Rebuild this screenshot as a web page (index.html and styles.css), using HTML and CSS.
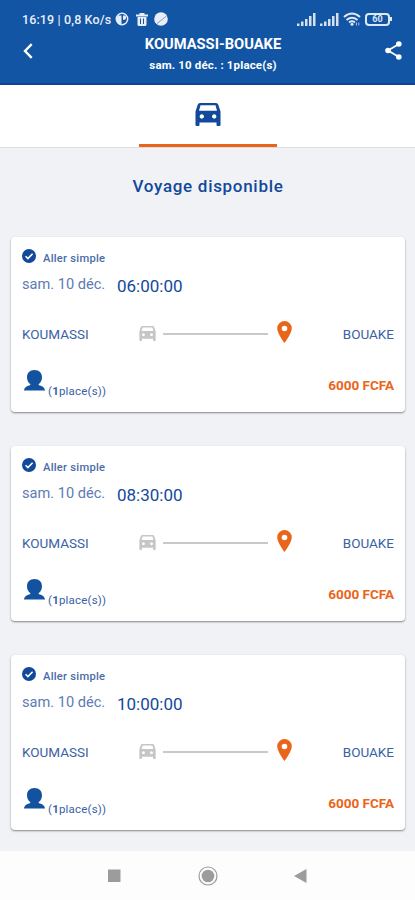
FILE: index.html
```html
<!DOCTYPE html>
<html lang="fr">
<head>
    <meta charset="UTF-8">
    <meta name="viewport" content="width=device-width, initial-scale=1.0">
    <title>KOUMASSI-BOUAKE</title>
    <link rel="stylesheet" href="styles.css">
</head>
<body>
    <!-- Shared icons -->
    <svg class="sprite" aria-hidden="true">
        <symbol id="icon-car" viewBox="0 0 26 23">
            <path fill-rule="evenodd" d="M5 0h16q1.800 0 2.200 1.500L25.500 8.500V22q0 1-1 1h-2q-1 0-1-1v-2.500h-17V22q0 1-1 1h-2q-1 0-1-1V8.500L2.800 1.500Q3.200 0 5 0zM5.500 2.200L4 7.800h18L20.500 2.200zM6.800 11.300a2.200 2.200 0 1 0 .01 0zM19.200 11.300a2.200 2.200 0 1 0 .01 0z"/>
        </symbol>
        <symbol id="icon-check" viewBox="0 0 14 14">
            <circle cx="7" cy="7" r="7"/>
            <path d="M3.600 7.200l2.300 2.300 4.700-4.800" fill="none" stroke="#fff" stroke-width="1.600"/>
        </symbol>
        <symbol id="icon-pin" viewBox="0 0 15 22">
            <path fill-rule="evenodd" d="M7.500 0A7.300 7.300 0 0 0 .2 7.300C.2 12.500 7.500 22 7.500 22s7.300-9.500 7.300-14.700A7.300 7.300 0 0 0 7.500 0zm0 4.700a2.800 2.800 0 1 1 0 5.600 2.800 2.800 0 0 1 0-5.600z"/>
        </symbol>
        <symbol id="icon-person" viewBox="0 0 21 21">
            <path d="M10.500 0c4.700 0 7.500 3 7.500 7.200 0 3.200-1.300 5.500-3.300 6.900v.8c3 1 5.800 2 6.300 5.600H0c.5-3.600 3.300-4.600 6.300-5.600v-.8C4.300 12.700 3 10.400 3 7.200 3 3 5.800 0 10.500 0z"/>
        </symbol>
        <symbol id="icon-signal" viewBox="0 0 19 13">
            <path d="M0 10.500h2.500V13H0zM4 8.500h2.500V13H4zM8 6h2.500v7H8zM12 3h2.500v10H12zM16 0h2.500v13H16z"/>
        </symbol>
    </svg>

    <header class="header">
        <div class="status-bar">
            <span class="status-text">16:19 | 0,8 Ko/s</span>
            <svg class="icon-round" viewBox="0 0 14 14">
                <circle cx="7" cy="7" r="5.700" fill="none" stroke="#e8eef8" stroke-width="1.500"/>
                <path d="M3 3.500h3.500V13q-5-1-5-6zM8 3.500h1.500q1.500 0 1.500 1.500v1q0 1.700-1.500 1.700H8z" fill="#e8eef8"/>
            </svg>
            <svg class="icon-trash" viewBox="0 0 12 13">
                <path fill="#e8eef8" d="M0 1.500h3.500V0h5v1.500H12v2H0zM1.500 4h9v7.500q0 1.500-1.500 1.500H3q-1.500 0-1.500-1.500z"/>
                <path d="M4.500 5.500v5.500M7.500 5.500v5.500" stroke="#1255a4" stroke-width="1"/>
            </svg>
            <svg class="icon-round" viewBox="0 0 14 14">
                <circle cx="7" cy="7" r="6.800" fill="#e8eef8"/>
                <path d="M3 11.500L12.500 4" stroke="#7fa0cf" stroke-width="1"/>
            </svg>
            <span class="spacer"></span>
            <svg class="icon-signal"><use href="#icon-signal"/></svg>
            <svg class="icon-signal"><use href="#icon-signal"/></svg>
            <svg class="icon-wifi" viewBox="0 0 18 14">
                <path d="M1 5q8-7 16 0M3.500 8q5.500-4.500 11 0M6 10.500q3-2.300 6 0" fill="none" stroke="#dfe8f5" stroke-width="1.900"/>
                <circle cx="9" cy="12.300" r="1.500" fill="#dfe8f5"/>
                <path d="M13.500 10.500v3M15.800 10.500v3" stroke="#a9c0e0" stroke-width="1"/>
            </svg>
            <div class="battery"><span>60</span></div>
            <span class="battery-tip"></span>
        </div>
        <div class="nav-bar">
            <svg class="icon-back" viewBox="0 0 10 16">
                <path d="M8.700 1.200L2 8l6.700 6.800" fill="none" stroke="#fff" stroke-width="2.400"/>
            </svg>
            <div class="nav-title">
                <h1>KOUMASSI-BOUAKE</h1>
                <p>sam. 10 déc. : 1place(s)</p>
            </div>
            <svg class="icon-share" viewBox="0 0 17 19">
                <path d="M14 3L3 9.500 14 16" fill="none" stroke="#fff" stroke-width="1.800"/>
                <circle cx="13.800" cy="3" r="2.800" fill="#fff"/>
                <circle cx="3" cy="9.500" r="2.800" fill="#fff"/>
                <circle cx="13.800" cy="16" r="2.800" fill="#fff"/>
            </svg>
        </div>
    </header>

    <div class="tabs">
        <div class="tab active">
            <svg class="tab-car"><use href="#icon-car"/></svg>
        </div>
    </div>

    <main class="content">
        <h2>Voyage disponible</h2>

        <div class="card">
            <div class="trip-type">
                <svg class="icon-check"><use href="#icon-check"/></svg>
                <span>Aller simple</span>
            </div>
            <div class="trip-date">
                <span class="date">sam. 10 déc.</span>
                <span class="time">06:00:00</span>
            </div>
            <div class="route">
                <span class="city">KOUMASSI</span>
                <svg class="route-car"><use href="#icon-car"/></svg>
                <span class="route-line"></span>
                <svg class="route-pin"><use href="#icon-pin"/></svg>
                <span class="city to">BOUAKE</span>
            </div>
            <div class="card-footer">
                <svg class="icon-person"><use href="#icon-person"/></svg>
                <span class="places">(<b>1</b>place(s))</span>
                <span class="price">6000 FCFA</span>
            </div>
        </div>

        <div class="card">
            <div class="trip-type">
                <svg class="icon-check"><use href="#icon-check"/></svg>
                <span>Aller simple</span>
            </div>
            <div class="trip-date">
                <span class="date">sam. 10 déc.</span>
                <span class="time">08:30:00</span>
            </div>
            <div class="route">
                <span class="city">KOUMASSI</span>
                <svg class="route-car"><use href="#icon-car"/></svg>
                <span class="route-line"></span>
                <svg class="route-pin"><use href="#icon-pin"/></svg>
                <span class="city to">BOUAKE</span>
            </div>
            <div class="card-footer">
                <svg class="icon-person"><use href="#icon-person"/></svg>
                <span class="places">(<b>1</b>place(s))</span>
                <span class="price">6000 FCFA</span>
            </div>
        </div>

        <div class="card">
            <div class="trip-type">
                <svg class="icon-check"><use href="#icon-check"/></svg>
                <span>Aller simple</span>
            </div>
            <div class="trip-date">
                <span class="date">sam. 10 déc.</span>
                <span class="time">10:00:00</span>
            </div>
            <div class="route">
                <span class="city">KOUMASSI</span>
                <svg class="route-car"><use href="#icon-car"/></svg>
                <span class="route-line"></span>
                <svg class="route-pin"><use href="#icon-pin"/></svg>
                <span class="city to">BOUAKE</span>
            </div>
            <div class="card-footer">
                <svg class="icon-person"><use href="#icon-person"/></svg>
                <span class="places">(<b>1</b>place(s))</span>
                <span class="price">6000 FCFA</span>
            </div>
        </div>
    </main>

    <footer class="system-nav">
        <svg viewBox="0 0 20 20"><path d="M3 3.500h12.500V16H3z" fill="#9c9c9c"/></svg>
        <svg viewBox="0 0 20 20">
            <circle cx="10" cy="10" r="9" fill="none" stroke="#9c9c9c" stroke-width="1.200"/>
            <circle cx="10" cy="10" r="6.300" fill="#9c9c9c"/>
        </svg>
        <svg viewBox="0 0 20 20"><path d="M3 10L15.500 3v14z" fill="#9c9c9c"/></svg>
    </footer>
</body>
</html>
```

FILE: styles.css
```css
* {
    margin: 0;
    padding: 0;
    box-sizing: border-box;
}

body {
    font-family: Roboto, 'Liberation Sans', sans-serif;
    background: #f0f2f6;
    color: #12499b;
    width: 415px;
    height: 900px;
    display: flex;
    flex-direction: column;
    overflow: hidden;
}

svg {
    display: block;
    flex-shrink: 0;
}

span {
    white-space: nowrap;
}

.sprite {
    display: none;
}

/* Header */
.header {
    flex-shrink: 0;
    height: 85px;
    padding-top: 7px;
    background: #1255a4;
    border-bottom: 2px solid #0b4799;
    color: #fff;
}

.status-bar {
    display: flex;
    align-items: center;
    height: 24px;
    padding: 0 23px 0 22px;
}

.status-text {
    width: 93px;
    font-size: 12.5px;
    font-weight: 500;
    letter-spacing: 0.12px;
    color: #e8eef8;
}

.icon-round {
    width: 14px;
    height: 14px;
}

.icon-trash {
    width: 12px;
    height: 13px;
    margin: 0 6px 0 7px;
}

.spacer {
    flex: 1;
}

.icon-signal {
    width: 19px;
    height: 13px;
    margin-right: 4px;
    fill: #d5e0f1;
}

.icon-wifi {
    width: 18px;
    height: 14px;
    margin-right: 4px;
}

.battery {
    display: flex;
    align-items: center;
    justify-content: center;
    width: 25px;
    height: 13px;
    border: 2px solid #dfe8f5;
    border-radius: 4px;
    font-size: 9px;
    font-weight: 700;
    color: #dfe8f5;
}

.battery-tip {
    width: 2px;
    height: 4px;
    background: #dfe8f5;
}

.nav-bar {
    display: flex;
    align-items: flex-start;
    justify-content: space-between;
    height: 50px;
    padding: 4px 13px 0 23px;
}

.icon-back {
    width: 10px;
    height: 16px;
    margin-top: 8px;
}

.nav-title {
    width: 160px;
    margin-left: 8px;
    text-align: center;
}

.nav-title h1 {
    font-size: 14.7px;
    line-height: 19px;
    font-weight: 700;
    white-space: nowrap;
}

.nav-title p {
    font-size: 11.5px;
    line-height: 22px;
    font-weight: 700;
    letter-spacing: 0.15px;
    white-space: nowrap;
}

.icon-share {
    width: 17px;
    height: 19px;
    margin-top: 6px;
}

/* Tabs */
.tabs {
    display: flex;
    flex-shrink: 0;
    justify-content: center;
    height: 63px;
    background: #fff;
    border-bottom: 1px solid #dcdee2;
}

.tab {
    display: flex;
    justify-content: center;
    width: 138px;
    padding-top: 18px;
}

.tab.active {
    border-bottom: 3px solid #e9651a;
}

.tab-car {
    width: 26px;
    height: 23px;
    fill: #12499b;
}

/* Trips */
.content {
    flex: 1;
    min-height: 0;
    overflow: hidden;
    padding: 24px 10px 0 11px;
}

.content h2 {
    height: 65px;
    font-size: 17px;
    line-height: 28px;
    font-weight: 500;
    letter-spacing: 0.7px;
    text-align: center;
}

.card {
    height: 175px;
    margin-bottom: 34px;
    padding: 11px 11px 0;
    background: #fff;
    border-radius: 4px;
    box-shadow: 0 1px 2px rgba(0, 0, 0, 0.45);
}

.trip-type {
    display: flex;
    gap: 7px;
    height: 22px;
}

.icon-check {
    width: 14px;
    height: 14px;
    margin-top: 1px;
    fill: #12499b;
}

.trip-type span {
    font-size: 11.2px;
    line-height: 21px;
    font-weight: 500;
    letter-spacing: 0.25px;
    color: #4a6ca8;
}

.trip-date {
    display: flex;
    height: 30px;
    line-height: 29px;
}

.date {
    width: 95px;
    font-size: 14.6px;
    color: #5d7cb2;
}

.time {
    font-size: 17px;
    line-height: 32px;
}

.route {
    display: flex;
    align-items: center;
    height: 40px;
    margin-top: 14px;
}

.city {
    width: 117px;
    font-size: 13.5px;
    color: #3a62a5;
}

.city.to {
    flex: 1;
    text-align: right;
}

.route-car {
    width: 17px;
    height: 15px;
    margin-top: -2px;
    fill: #c6c6c6;
}

.route-line {
    width: 105px;
    height: 2px;
    margin: 0 9px 0 7px;
    background: #c9c9c9;
}

.route-pin {
    width: 15px;
    height: 22px;
    margin-top: -5px;
    fill: #e9651a;
}

.card-footer {
    display: flex;
    height: 40px;
    padding-top: 16px;
}

.icon-person {
    width: 21px;
    height: 21px;
    margin-left: 2px;
    fill: #12529f;
}

.places {
    margin: 12px 0 0 3px;
    font-size: 11.5px;
    line-height: 18px;
    letter-spacing: 0.2px;
    color: #3a62a5;
}

.price {
    margin: 6px 0 0 auto;
    font-size: 13.5px;
    line-height: 18px;
    font-weight: 700;
    color: #e9651a;
}

/* Android navigation */
.system-nav {
    display: flex;
    flex-shrink: 0;
    justify-content: center;
    gap: 73px;
    height: 49px;
    padding-top: 15px;
    background: #fdfdfd;
}

.system-nav svg {
    width: 20px;
    height: 20px;
}
```
